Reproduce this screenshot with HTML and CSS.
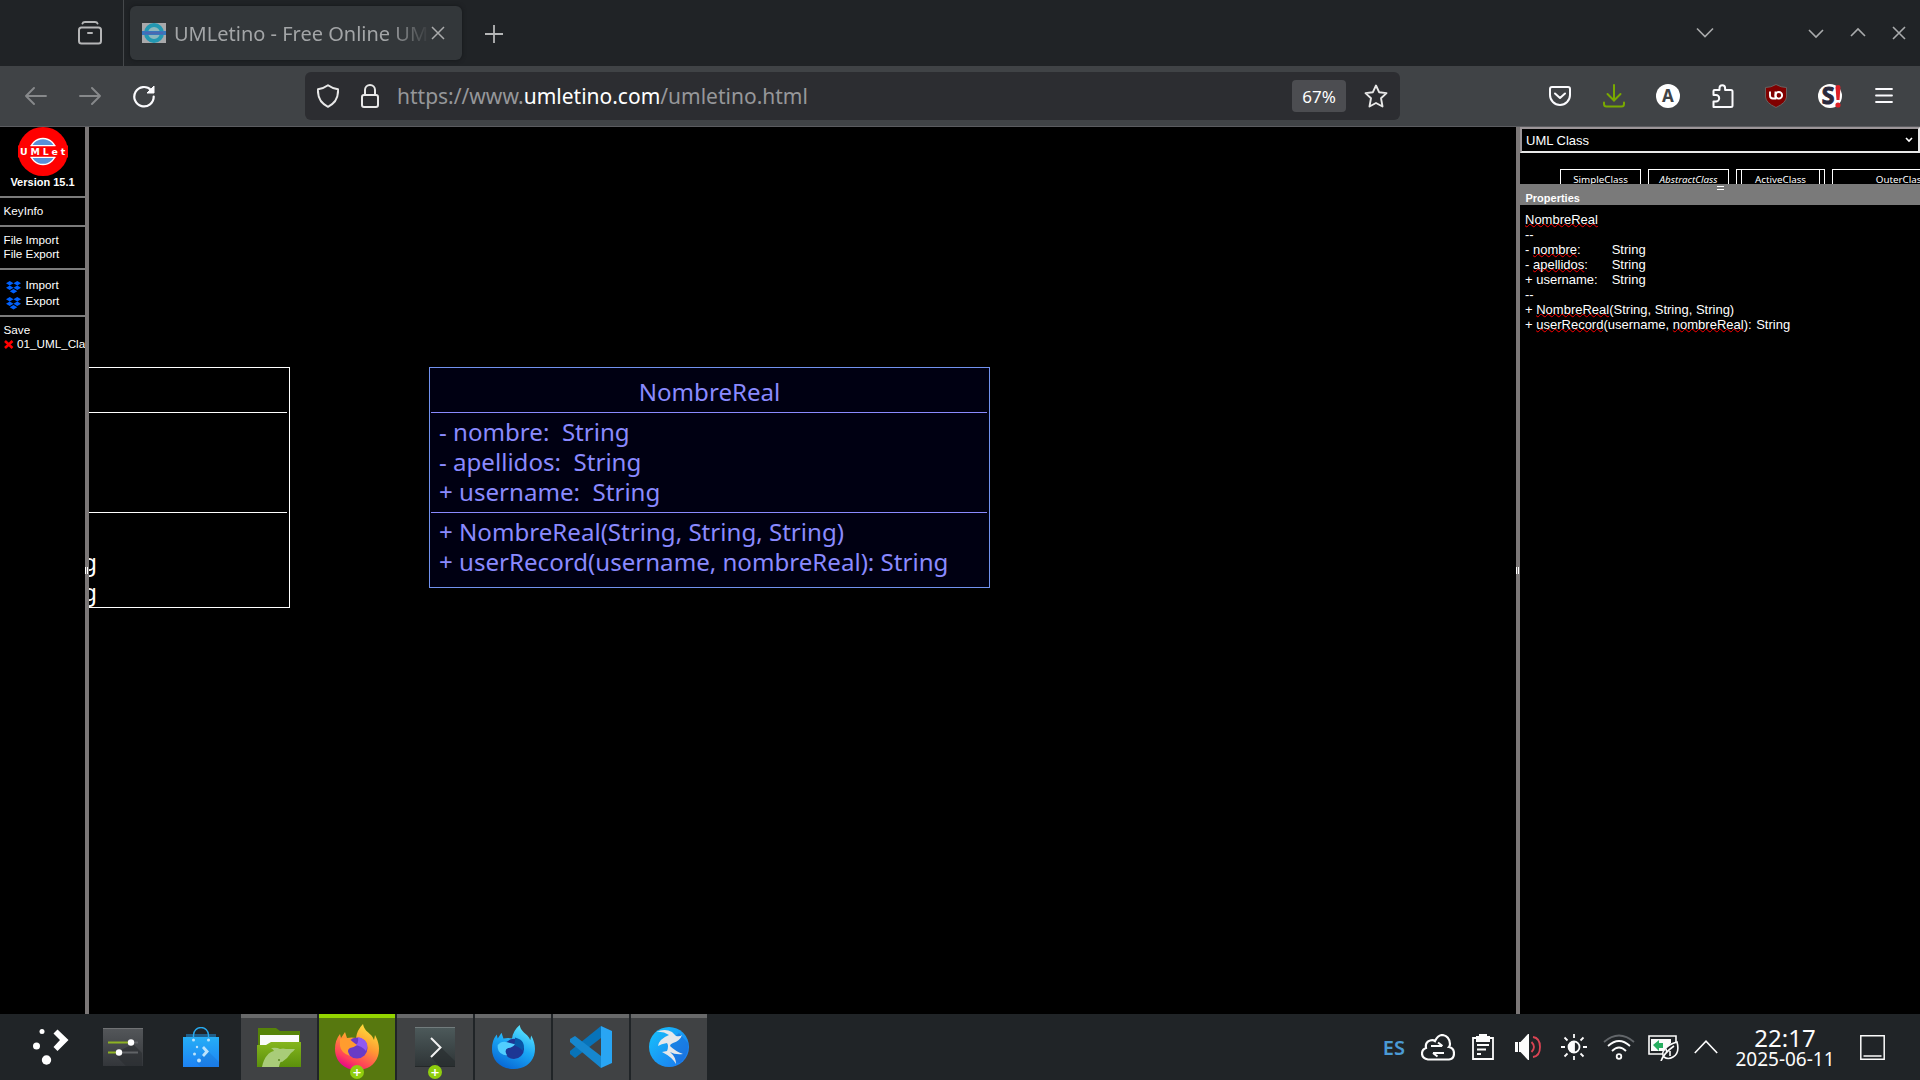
FILE: index.html
```html
<!DOCTYPE html>
<html lang="es">
<head>
<meta charset="utf-8">
<title>UMLetino - Free Online UML Tool</title>
<link rel="stylesheet" href="styles.css">
</head>
<body>
<header class="tabstrip">
  <div class="view-all">
    <svg width="26" height="26" viewBox="0 0 26 26" fill="none" stroke="#b5b6b7" stroke-width="2" stroke-linecap="round"><rect x="2" y="7.5" width="22" height="16" rx="2.5"/><path d="M5.5 3.5Q6 2 8 2h10q2 0 2.500 1.500M11 13h4"/></svg>
  </div>
  <div class="tab">
    <svg class="favicon" width="24" height="22" viewBox="0 0 24 22"><path fill="#a9a9ab" d="M0 1h24v20H0z"/><circle cx="12" cy="11" r="8" fill="#8db7bd" stroke="#2398b2" stroke-width="4"/><path fill="#3777bd" d="M0 9h24v4H0z"/><path d="M3 11h18" stroke="#605ca5" stroke-width="1"/></svg>
    <span class="tab-title">UMLetino - Free Online UML Tool</span>
    <svg width="14" height="14" viewBox="0 0 14 14" stroke="#aaabac" stroke-width="1.500"><path d="M1 1l12 12M13 1L1 13"/></svg>
  </div>
  <svg class="new-tab" width="18" height="18" viewBox="0 0 18 18" stroke="#b5b6b7" stroke-width="1.800"><path d="M9 0v18M0 9h18"/></svg>
  <div class="window-buttons">
    <svg class="list-tabs" width="18" height="12" viewBox="0 0 18 12"><path d="M1 1.500l8 8 8-8"/></svg>
    <svg width="16" height="12" viewBox="0 0 16 12"><path d="M1 3l7 7 7-7"/></svg>
    <svg width="16" height="12" viewBox="0 0 16 12"><path d="M1 9l7-7 7 7"/></svg>
    <svg width="14" height="14" viewBox="0 0 14 14"><path d="M1 1l12 12M13 1L1 13"/></svg>
  </div>
</header>

<nav class="toolbar">
  <div class="nav-buttons">
    <svg width="22" height="18" viewBox="0 0 22 18" fill="none" stroke="#87898b" stroke-width="1.900" stroke-linecap="round" stroke-linejoin="round"><path d="M21 9H1M9 1L1 9l8 8"/></svg>
    <svg width="22" height="18" viewBox="0 0 22 18" fill="none" stroke="#87898b" stroke-width="1.900" stroke-linecap="round" stroke-linejoin="round"><path d="M1 9h20M13 1l8 8-8 8"/></svg>
    <svg width="24" height="24" viewBox="0 0 24 24" fill="none" stroke="#fbfbfe" stroke-width="2.200"><path d="M19 6A9.700 9.700 0 1 0 21.700 12.500" stroke-linecap="round"/><path d="M22 2v7h-7z" fill="#fbfbfe" stroke-width="1"/></svg>
  </div>
  <div class="urlbar">
    <svg width="22" height="24" viewBox="0 0 22 24" fill="none" stroke="#e8e8e8" stroke-width="2"><path d="M11 1.200Q15.500 4.500 21 5.200C21.500 13 18 19.500 11 22.800C4 19.500.5 13 1 5.200Q6.500 4.500 11 1.200z" stroke-linejoin="round"/></svg>
    <svg class="lock" width="18" height="24" viewBox="0 0 18 24" fill="none" stroke="#e8e8e8" stroke-width="2"><rect x="1" y="11" width="16" height="12" rx="2"/><path d="M4 11V6a5 5 0 0 1 10 0v5"/></svg>
    <span class="url">https://www.<b>umletino.com</b>/umletino.html</span>
    <span class="zoom">67%</span>
    <svg width="24" height="24" viewBox="0 0 24 24" fill="none" stroke="#e8e8e8" stroke-width="1.900" stroke-linejoin="round"><path d="M12 1.500l3.100 6.700 7.400.900-5.500 5.100 1.500 8.300L12 19l-6.500 3.500L7 14.200 1.500 9.100l7.400-.900z"/></svg>
  </div>
  <div class="extensions">
    <svg width="24" height="24" viewBox="0 0 24 24" fill="none" stroke="#fbfbfe" stroke-width="2" stroke-linecap="round" stroke-linejoin="round"><path d="M4 3h16q2 0 2 2v6a10 10 0 0 1-20 0V5q0-2 2-2zM7 9.500l5 4.500 5-4.500"/></svg>
    <svg width="24" height="24" viewBox="0 0 24 24" fill="none" stroke="#79a900" stroke-width="2" stroke-linecap="round"><path d="M12 1v15M5.500 10l6.500 6.500 6.500-6.500M2 18.500V20q0 2.500 2.500 2.500h15q2.500 0 2.500-2.500v-1.500"/></svg>
    <svg width="24" height="24" viewBox="0 0 24 24"><circle cx="12" cy="12" r="12" fill="#fff"/><text class="badge-a" x="12" y="18" text-anchor="middle">A</text></svg>
    <svg width="24" height="24" viewBox="0 0 24 24" fill="none" stroke="#fbfbfe" stroke-width="2" stroke-linejoin="round"><path d="M3.500 23V17.500H6a3.200 3.200 0 0 0 0-6.400H3.500V7q0-1 1-1H9.500V4a2.800 2.800 0 0 1 5.600 0v2H21q1.500 0 1.500 1.500V21.500q0 1.500-1.500 1.500z"/></svg>
    <svg width="24" height="24" viewBox="0 0 24 24"><path d="M12 .5Q17 3.500 22.500 3.500V13Q22 19 12 23.500Q2 19 1.500 13V3.500Q7 3.500 12 .5z" fill="#800000" stroke="#69605f"/><g fill="none" stroke="#fff" stroke-width="1.900"><path d="M6 7.500v4q0 3 3 3h2.500V7.500"/><circle cx="14.800" cy="11.300" r="3.300"/></g></svg>
    <svg width="24" height="24" viewBox="0 0 24 24"><circle cx="12" cy="12" r="12" fill="#fff"/><text class="badge-s" x="10" y="20" text-anchor="middle">S</text><path d="M17.500 3q0-2 2.500-2t2.500 2l-1 13h-3z" fill="#dc2027"/><circle cx="20" cy="21" r="2.600" fill="#dc2027"/></svg>
    <svg width="24" height="24" viewBox="0 0 24 24" stroke="#fbfbfe" stroke-width="1.800" stroke-linecap="round"><path d="M4 5h16M4 11.500h16M4 18h16"/></svg>
  </div>
</nav>

<main class="app">
  <aside class="menu">
    <section class="brand">
      <svg width="50" height="49" viewBox="0 0 50 49"><ellipse cx="25" cy="24.500" rx="25" ry="24.500" fill="#f00"/><circle cx="25" cy="24.500" r="13" fill="#588fd8" stroke="#fff" stroke-width="1.300"/><path fill="#f00" d="M0 18.500h50v12H0z"/><path d="M12.500 18.700h25M12.500 30.300h25" stroke="#fff" stroke-width="1.200"/><text class="logo-text" x="2" y="28">UMLet</text></svg>
      <div class="version">Version 15.1</div>
    </section>
    <section class="group key"><div>KeyInfo</div></section>
    <section class="group files"><div>File Import</div><div>File Export</div></section>
    <section class="group dropbox">
      <div><svg width="15" height="13" viewBox="0 0 14 13" preserveAspectRatio="none" fill="#0061fe"><path d="M3.500 0L7 2.200 3.500 4.400 0 2.200zM10.500 0L14 2.200l-3.500 2.200L7 2.200zM3.500 4.600L7 6.800 3.500 9 0 6.800zM10.500 4.600L14 6.800 10.500 9 7 6.800zM7 8l3.500 2.300L7 12.500l-3.500-2.200z"/></svg>Import</div>
      <div><svg width="15" height="13" viewBox="0 0 14 13" preserveAspectRatio="none" fill="#0061fe"><path d="M3.500 0L7 2.200 3.500 4.400 0 2.200zM10.500 0L14 2.200l-3.500 2.200L7 2.200zM3.500 4.600L7 6.800 3.500 9 0 6.800zM10.500 4.600L14 6.800 10.500 9 7 6.800zM7 8l3.500 2.300L7 12.500l-3.500-2.200z"/></svg>Export</div>
    </section>
    <section class="group saves"><div>Save</div><div class="saved"><svg width="10" height="9" viewBox="0 0 10 9" stroke="#f00" stroke-width="2.600"><path d="M1 1l7.500 7M8.500 1L1 8"/></svg>01_UML_Cla</div></section>
  </aside>
  <div class="splitter"><i></i></div>

  <div class="canvas">
    <div class="uml plain">
      <div class="uml-name"></div>
      <div class="uml-part attrs"></div>
      <div class="uml-part ops"><p>String</p><p>String</p></div>
    </div>
    <div class="uml selected">
      <div class="uml-name">NombreReal</div>
      <div class="uml-part attrs"><p>- nombre:  String</p><p>- apellidos:  String</p><p>+ username:  String</p></div>
      <div class="uml-part ops"><p>+ NombreReal(String, String, String)</p><p>+ userRecord(username, nombreReal): String</p></div>
    </div>
  </div>

  <div class="splitter"><i></i></div>
  <aside class="side">
    <div class="select"><span>UML Class</span><svg width="8" height="6" viewBox="0 0 8 6" fill="none" stroke="#fff" stroke-width="1.600"><path d="M1 1l3 3 3-3"/></svg></div>
    <div class="palette">
      <div class="item">SimpleClass</div>
      <div class="item abstract">AbstractClass</div>
      <div class="item active"><span>ActiveClass</span></div>
      <div class="item outer">OuterClass</div>
    </div>
    <div class="props-head"><i></i><b>Properties</b></div>
    <div class="props"><u>NombreReal</u>
--
- <u>nombre</u>:&#9;&#9;String
- <u>apellidos</u>:&#9;String
+ username:&#9;String
--
+ <u>NombreReal</u>(String, String, String)
+ <u>userRecord</u>(username, <u>nombreReal</u>):&#9;String</div>
  </aside>
</main>

<footer class="taskbar">
  <div class="launchers">
    <div class="launcher"><svg width="36" height="36" viewBox="0 0 36 36" fill="#fff"><path d="M20.500 4.500l4-4L35.500 11l-11 11-4-4 6.500-7z"/><circle cx="9" cy="2.500" r="2.500"/><circle cx="3.500" cy="17" r="3.500"/><circle cx="13.500" cy="31" r="4.700"/></svg></div>
    <div class="launcher"><svg width="40" height="40" viewBox="0 0 40 40"><defs><linearGradient id="dark" x2="0" y2="1"><stop stop-color="#54575a"/><stop offset="1" stop-color="#33363a"/></linearGradient></defs><path fill="url(#dark)" d="M0 1h40v38H0z"/><path fill="#2a2d30" opacity=".6" d="M30 17l9 9v13H23l-9-9 4-7z"/><path d="M0 1.500h40" stroke="#707274"/><path d="M28 15.500h7M16 25.500h19" stroke="#606366" stroke-width="2"/><path d="M5 15.500h23M5 25.500h11" stroke="#8db223" stroke-width="2"/><circle cx="28" cy="15.500" r="3.200" fill="#fff"/><circle cx="16" cy="25.500" r="3.200" fill="#fff"/></svg></div>
    <div class="launcher"><svg width="36" height="40" viewBox="0 0 36 40"><defs><linearGradient id="bag" x2="0" y2="1"><stop stop-color="#25aef6"/><stop offset="1" stop-color="#1d82f3"/></linearGradient></defs><path fill="#205d87" d="M3 7h30v5H3z"/><path fill="url(#bag)" d="M0 10h36v30H0z"/><path fill="#1565bd" opacity=".25" d="M24 23l12 12v5H18l-5-5 9-8z"/><path d="M10.500 13V8a7.500 7.500 0 0 1 15 0v5" fill="none" stroke="#27a9ee" stroke-width="1.400"/><g fill="#bce3fc"><circle cx="10.500" cy="13" r="1.500"/><circle cx="25.500" cy="13" r="1.500"/><circle cx="14" cy="20" r="1.200"/><circle cx="11.500" cy="27" r="1.500"/><circle cx="16" cy="33.500" r="2"/><path d="M19 21l2-2 5 5.500-5 5.500-2-2 3-3.500z"/></g></svg></div>
  </div>
  <div class="tasks">
    <div class="task"><svg width="44" height="40" viewBox="0 0 44 40"><defs><linearGradient id="folder" x2="0" y2="1"><stop stop-color="#85b51d"/><stop offset="1" stop-color="#5b900c"/></linearGradient></defs><path fill="#568308" d="M1 1h18l4 3h20v16H1z"/><path fill="#fafafa" d="M3 8h39v12H3z"/><path fill="url(#folder)" d="M0 18h9l5-3h30v25H0z"/><path fill="#a9cc79" d="M5 40C7 30 12 25 17 24q-1-2-3-3 6-1 9 1 3-1 6 0 5 0 9 0-1 2-4 4-3 5-9 9-2-1-3 5z"/><circle cx="22" cy="33" r="1" fill="#5a8420"/></svg></div>
    <div class="task current">
      <svg width="46" height="46" viewBox="0 0 46 46"><defs><linearGradient id="fire" x1=".8" x2=".3" y2="1"><stop stop-color="#ffe83d"/><stop offset=".45" stop-color="#ff9832"/><stop offset=".8" stop-color="#ff405a"/><stop offset="1" stop-color="#e4008d"/></linearGradient></defs><path fill="url(#fire)" d="M29 0c1 6 5 8 8 11q2 2 3 5l1-5c4 7 5 14 3 21-3 9-11 14-21 14C10 46 1 37 1 25q0-9 5-15l1 4 4-6 2 6q5-1 9 0 1-8 7-14z"/><circle cx="23" cy="24" r="10.500" fill="#693bc6"/><path fill="#9059f2" d="M24 13c9 2 11 8 8 14q-4-5-11-6 4-1 3-8z"/><path fill="#ff9c2e" d="M6 15q7-3 13 3l4 3q-4 3-7 3-4 2 0 8-9-3-10-10z"/></svg><span class="plus">+</span>
    </div>
    <div class="task"><svg width="40" height="40" viewBox="0 0 40 40"><defs><linearGradient id="term" x2="0" y2="1"><stop stop-color="#4d5a5b"/><stop offset="1" stop-color="#2e3436"/></linearGradient></defs><path fill="url(#term)" d="M0 0h40v40H0z"/><path fill="#262b2d" opacity=".6" d="M16 30l10-9.500L40 34v6H25z"/><path d="M0 .5h40" stroke="#727c7d"/><path d="M0 39.500h40" stroke="#242829"/><path d="M16 11l9.500 9.500L16 30" fill="none" stroke="#f2f2f2" stroke-width="2"/></svg><span class="plus">+</span></div>
    <div class="task"><svg width="44" height="44" viewBox="0 0 46 46"><defs><linearGradient id="ice" x1=".8" x2=".3" y2="1"><stop stop-color="#65edff"/><stop offset=".5" stop-color="#1aa7f5"/><stop offset="1" stop-color="#0867d5"/></linearGradient></defs><path fill="url(#ice)" d="M30 0c1 6 5 8 8 11q2 2 3 5l1-5c4 7 5 14 3 21-3 9-11 14-21 14C10 46 1 37 1 25q0-9 5-15l1 4 4-6 2 6q5-1 9 0 1-8 8-14z"/><circle cx="24" cy="25" r="10.500" fill="#1d3694"/><path fill="#0756a6" d="M25 13c9 2 11 8 8 14q-4-5-11-6 4-1 3-8z"/><path fill="#51ceff" d="M7 21q4-5 10-3l8 2q-3 4-7 4-5 2-1 8-9-1-10-8z"/></svg></div>
    <div class="task"><svg width="42" height="42" viewBox="0 0 42 42"><path fill="#0873b9" d="M31 0v12L5 32 0 28v-3z"/><path fill="#1687cf" d="M31 42V30L5 10 0 13v3z"/><path fill="#29a5f3" d="M31 0l11 5v32l-11 5z"/></svg></div>
    <div class="task"><svg width="40" height="40" viewBox="0 0 40 40"><defs><linearGradient id="bird" x2="1" y2="1"><stop stop-color="#16c5fd"/><stop offset="1" stop-color="#1c73ed"/></linearGradient></defs><circle cx="20" cy="20" r="20" fill="url(#bird)"/><path fill="#1867d3" opacity=".5" d="M30 6l9 10q1 12-8 20l-5-1-8-18z"/><path fill="#e5e8eb" d="M7 5q9-4 16 0 2 2 4 4 4 1 6-1-2 6-9 8-3 1-3 3 5 5 13 8-8 1-13-2 6 5 6 12-4-7-14-12l5-1q2-5 0-8Q12 17 9 19q1-7 11-11-6-4-13-3z"/></svg></div>
  </div>
  <div class="tray">
    <span class="lang">ES</span>
    <svg class="cloud" width="34" height="27" viewBox="0 0 34 27" fill="none" stroke="#fcfcfc" stroke-width="2.200"><path d="M7 25.500q-6-1-6-6 0-4 4-5.500-1-6 4-7.500 3-1 5 .5Q17 1 21.500 1q7 1 7.500 9 0 2-1 3 5 1 5 6.500t-5 6z"/><path d="M10 12h11M17 8.500l4.500 3.500M23 19H12M16.500 22.500L12 19" stroke-width="2"/></svg>
    <svg class="clipboard" width="22" height="26" viewBox="0 0 22 26" fill="none" stroke="#fcfcfc" stroke-width="1.800"><path d="M1 4h20v21H1z"/><path fill="#fcfcfc" stroke="none" d="M4 2h3V0h8v2h3v6H4z"/><path d="M5 11h12M5 15.500h9M5 20h4"/></svg>
    <svg class="volume" width="26" height="26" viewBox="0 0 26 26"><path fill="#fcfcfc" d="M0 8h3v10H0zM4 8h1.500L13 0h1v26h-1l-7.500-8H4z"/><path d="M16.500 8q5 5 0 10M18 3q7 1 7 10t-7 10" fill="none" stroke="#da4453" stroke-width="1.800"/></svg>
    <svg class="brightness" width="26" height="26" viewBox="0 0 26 26" fill="none" stroke="#fcfcfc" stroke-width="1.800"><circle cx="13" cy="13" r="5.500"/><path d="M13 8a5 5 0 0 0 0 10z" fill="#fcfcfc"/><path d="M13 0v4M13 22v4M0 13h4M22 13h4M3.500 3.500l3 3M19.500 19.500l3 3M22.500 3.500l-3 3M6.500 19.500l-3 3"/></svg>
    <svg class="wifi" width="32" height="26" viewBox="0 0 32 26" fill="none" stroke="#fcfcfc" stroke-width="1.800"><path d="M1 8Q16-5 31 8" stroke="#62666a"/><path d="M5 12Q16 2 27 12M9 17q7-7 14 0"/><circle cx="16" cy="22.500" r="2.300"/></svg>
    <svg class="battery" width="31" height="28" viewBox="0 0 31 28" fill="none" stroke="#fcfcfc" stroke-width="1.600"><path d="M14 21H1V3h27v6"/><path fill="#fcfcfc" stroke="none" d="M3 6h20v4l-8 8H3z"/><path fill="#27ae60" stroke="none" d="M5 12l6-5v3h4v5h-4v3z"/><path fill="#202326" d="M29 9q3 11-4 15-5 3-9 0-3-4 1-8 4-5 12-7z"/><path d="M13 28q3-8 13-15M19 20l-1-4M22 18v5"/></svg>
    <svg class="expand" width="24" height="14" viewBox="0 0 24 14" fill="none" stroke="#fcfcfc" stroke-width="1.600"><path d="M.8 13L12 1.200 23.200 13"/></svg>
    <div class="clock"><span class="time">22:17</span><span class="date">2025-06-11</span></div>
    <svg width="25" height="25" viewBox="0 0 25 25" fill="none" stroke="#fcfcfc" stroke-width="1.500"><path d="M.8.800h23.400v23.400H.8zM3.500 21h18"/></svg>
  </div>
</footer>
</body>
</html>
```
FILE: styles.css
```css
* { box-sizing: border-box; }
body {
  margin: 0;
  width: 1920px;
  height: 1080px;
  overflow: hidden;
  display: flex;
  flex-direction: column;
  background: #000;
  color: #fff;
  font-family: "Noto Sans", sans-serif;
}
svg { display: block; flex: none; }
p { margin: 0; white-space: pre; }

/* Browser chrome */
.tabstrip {
  height: 66px;
  flex: none;
  display: flex;
  align-items: center;
  background: #202326;
}
.view-all {
  width: 124px;
  height: 66px;
  padding: 20px 0 0 77px;
  border-right: 1px solid #45484b;
}
.tab {
  width: 332px;
  height: 54px;
  margin-left: 6px;
  padding: 0 17px 0 12px;
  display: flex;
  align-items: center;
  background: #33373a;
  border-radius: 6px;
  box-shadow: 0 0 4px #15181a;
}
.tab-title {
  width: 253px;
  margin: 0 4px 0 8px;
  overflow: hidden;
  white-space: nowrap;
  font-size: 20px;
  color: #a3a5a7;
  mask-image: linear-gradient(90deg, #000 215px, transparent 256px);
}
.new-tab { margin-left: 23px; margin-top: 2px; }
.window-buttons {
  margin-left: auto;
  padding-right: 14px;
  display: flex;
  align-items: center;
  gap: 26px;
  fill: none;
  stroke: #a9abac;
  stroke-width: 1.6;
}
.list-tabs { margin-right: 68px; }
.toolbar {
  height: 61px;
  flex: none;
  display: flex;
  align-items: center;
  background: #404346;
  border-bottom: 1px solid #5b5c60;
}
.nav-buttons {
  width: 305px;
  padding-left: 25px;
  display: flex;
  align-items: center;
  gap: 31.5px;
}
.urlbar {
  width: 1095px;
  height: 48px;
  padding: 0 12px;
  display: flex;
  align-items: center;
  background: #2c2d31;
  border-radius: 6px;
}
.lock { margin-left: 22px; }
.url {
  flex: 1;
  margin-left: 18px;
  padding-bottom: 1px;
  font-size: 21px;
  color: #96979a;
}
.url b { font-weight: 400; color: #fff; }
.zoom {
  width: 54px;
  height: 32px;
  margin-right: 18px;
  border-radius: 4px;
  background: #4c4d51;
  font-size: 17px;
  line-height: 33px;
  text-align: center;
}
.extensions {
  margin-left: 148px;
  display: flex;
  gap: 30px;
}
.badge-a { font: 700 17px "Noto Sans", sans-serif; fill: #404346; }
.badge-s { font: 700 23px "Noto Sans", sans-serif; fill: #2b2a3d; stroke: #2b2a3d; }

/* UMLetino */
.app {
  height: 887px;
  flex: none;
  display: flex;
  font-family: "Liberation Sans", sans-serif;
}
.menu {
  width: 85px;
  overflow: hidden;
  font-size: 11.7px;
  line-height: 14px;
  white-space: nowrap;
}
.brand { height: 69px; padding-left: 18px; }
.version {
  width: 85px;
  margin-left: -18px;
  text-align: center;
  font-size: 11px;
  font-weight: 700;
  line-height: 12px;
}
.logo-text {
  font: 700 9.4px "DejaVu Sans", sans-serif;
  letter-spacing: 2.9px;
  fill: #fff;
}
.group {
  padding: 6px 0 0 3.5px;
  border-top: 2px solid #7b7b7b;
}
.key { height: 29px; }
.files { height: 43px; }
.dropbox { height: 47px; padding-top: 7px; line-height: 16px; }
.dropbox div { display: flex; height: 16px; gap: 4.500px; padding-left: 2.5px; }
.dropbox svg { margin-top: 4px; }
.saved { display: flex; align-items: center; gap: 3px; padding-left: 0.5px; }
.splitter {
  width: 4px;
  display: flex;
  align-items: center;
  background: #7b7777;
}
.splitter i {
  width: 3px;
  height: 7px;
  border: solid #fff;
  border-width: 0 1px;
}
.canvas {
  position: relative;
  width: 1427px;
  overflow: hidden;
  font: 24.1px/30px "Noto Sans", sans-serif;
}
.uml {
  position: absolute;
  top: 240px;
  border: 1px solid #fff;
}
.uml-name { height: 44px; padding-top: 9px; text-align: center; }
.uml-part {
  margin: 0 2px 0 1px;
  padding: 4px 0 0 8px;
  border-top: 1px solid currentColor;
}
.attrs { height: 100px; }
.plain { left: -360px; width: 561px; height: 241px; }
.plain .ops { padding: 34px 190px 0 0; text-align: right; }
.selected {
  left: 340px;
  width: 561px;
  height: 221px;
  background: #000012;
  border-color: #7292ef;
  color: #8a8aff;
}
.side {
  width: 400px;
  display: flex;
  flex-direction: column;
  overflow: hidden;
}
.select {
  height: 26px;
  flex: none;
  padding: 0 5px 0 4px;
  display: flex;
  align-items: center;
  justify-content: space-between;
  border: 2px solid;
  border-color: #9b9598 #e8e8e8 #e8e8e8 #9b9598;
  font-size: 13px;
}
.palette {
  height: 31px;
  flex: none;
  padding: 16px 0 0 40px;
  display: flex;
  gap: 7px;
  overflow: hidden;
  font: 9.8px/19px "Noto Sans", sans-serif;
  text-align: center;
}
.item { width: 81px; height: 40px; flex: none; border: 1px solid #fff; }
.abstract { font-style: italic; }
.active { width: 89px; padding: 0 4px; }
.active span { display: block; height: 40px; border: solid #fff; border-width: 0 1px; }
.outer { width: 138px; }
.props-head {
  height: 21px;
  flex: none;
  padding: 2px 0 0 5.5px;
  background: #7a7a7a;
  font-size: 11px;
  line-height: 16px;
}
.props-head i {
  display: block;
  width: 7px;
  height: 4px;
  margin-left: 191px;
  border: solid #fff;
  border-width: 1px 0;
}
.props-head b { display: block; }
.props {
  padding: 7px 0 0 5px;
  font-size: 13px;
  line-height: 15px;
  white-space: pre;
  tab-size: 8;
}
.props u {
  text-decoration: underline wavy #f00 1.3px;
  text-underline-offset: -0.5px;
  text-decoration-skip-ink: none;
}

/* Desktop panel */
.taskbar {
  height: 66px;
  flex: none;
  display: flex;
  background: #202427;
}
.launchers { display: flex; width: 241px; padding-left: 13px; }
.launcher { width: 75px; display: flex; align-items: center; justify-content: center; }
.launcher + .launcher { width: 70px; }
.launcher:last-child { width: 83px; padding-left: 2px; }
.tasks { display: flex; gap: 2px; }
.task {
  position: relative;
  width: 76px;
  display: flex;
  align-items: center;
  justify-content: center;
  background: #404244;
  border-top: 4px solid #68696a;
  padding-bottom: 4px;
}
.current { background: #57780f; border-color: #93d500; }
.plus {
  position: absolute;
  left: 31px;
  bottom: 1px;
  width: 14px;
  height: 14px;
  border-radius: 50%;
  background: #8fce0e;
  font-size: 15px;
  font-weight: 600;
  line-height: 14px;
  text-align: center;
}
.tray {
  margin-left: auto;
  padding-right: 35px;
  display: flex;
  align-items: center;
  color: #fcfcfc;
}
.lang { font-size: 20px; font-weight: 600; color: #4b9ad5; margin-right: 16px; }
.cloud { margin-right: 17px; }
.clipboard { margin-right: 21px; }
.volume { margin-right: 20px; }
.brightness { margin-right: 16px; }
.wifi { margin-right: 13px; }
.battery { margin-right: 15px; }
.expand { margin-right: 17px; }
.clock {
  width: 100px;
  margin-right: 25px;
  display: flex;
  flex-direction: column;
  align-items: center;
}
.time { font-size: 24px; line-height: 24px; }
.date { font-size: 19px; line-height: 18px; }
```
